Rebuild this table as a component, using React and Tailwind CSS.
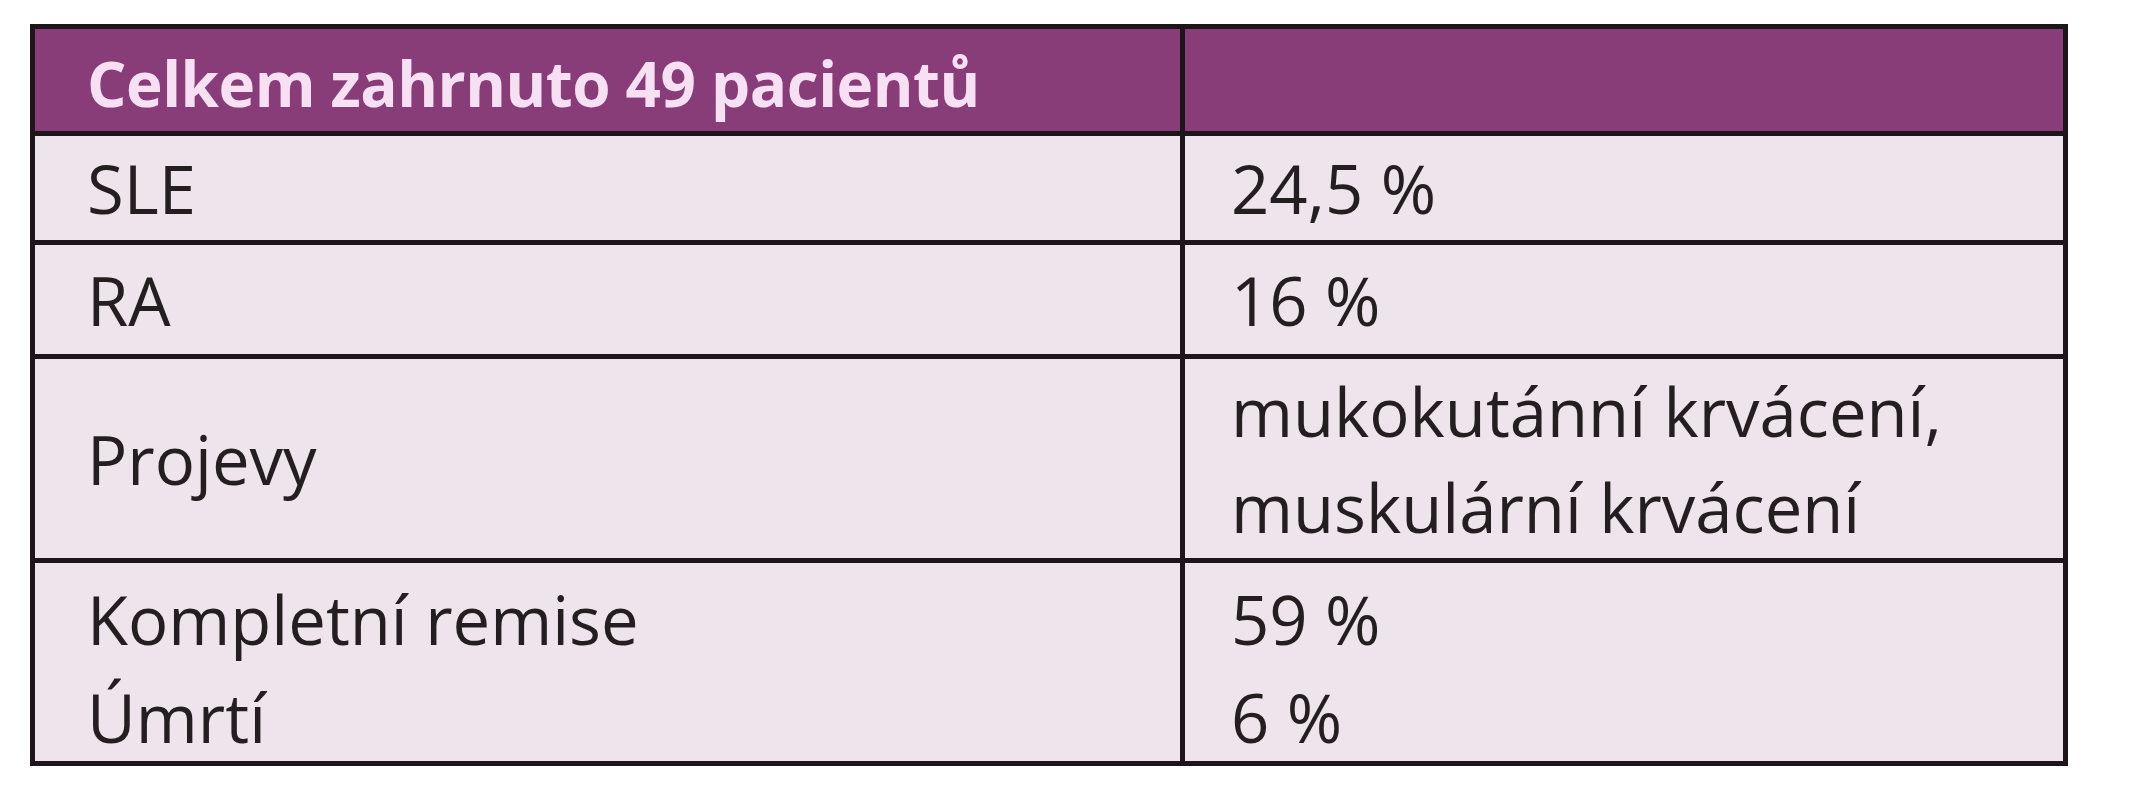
import React from "react";

const rows = [
  { left: ["SLE"], right: ["24,5 %"], h: "h-[109px]", cell: "justify-center" },
  { left: ["RA"], right: ["16 %"], h: "h-[114px]", cell: "justify-center" },
  {
    left: ["Projevy"],
    right: ["mukokutánní krvácení,", "muskulární krvácení"],
    h: "h-[204px]",
    cell: "justify-center",
  },
  {
    left: ["Kompletní remise", "Úmrtí"],
    right: ["59 %", "6 %"],
    h: "h-[198px] leading-[98px]",
    cell: "justify-start pt-[7px]",
  },
];

const App = () => {
  return (
    <div className="min-h-screen bg-white pt-[24px] pl-[30px] font-['Open_Sans',_'Noto_Sans',_sans-serif]">
      <div className="w-[2038px] border-[5px] border-[#1d151b] bg-[#eee4ec] text-[#231f20]">
        {/* Hlavička */}
        <div className="flex h-[107px] border-b-[5px] border-[#1d151b] bg-[#883d78]">
          <div className="flex w-[1145px] items-center pl-[52px] pt-[6px] text-[62px] font-bold tracking-[-0.5px] text-[#f7e0f3]">
            Celkem zahrnuto 49 pacientů
          </div>
          <div className="flex-1 border-l-[5px] border-[#1d151b]" />
        </div>

        {rows.map((row, i) => (
          <div
            key={i}
            className={`flex text-[67px] leading-[96px] ${row.h} ${
              i < rows.length - 1 ? "border-b-[5px] border-[#1d151b]" : ""
            }`}
          >
            <div className={`flex w-[1145px] flex-col pl-[52px] ${row.cell}`}>
              {row.left.map((t) => (
                <span key={t}>{t}</span>
              ))}
            </div>
            <div
              className={`flex flex-1 flex-col border-l-[5px] border-[#1d151b] pl-[46px] ${row.cell}`}
            >
              {row.right.map((t) => (
                <span key={t}>{t}</span>
              ))}
            </div>
          </div>
        ))}
      </div>
    </div>
  );
};

export default App;
